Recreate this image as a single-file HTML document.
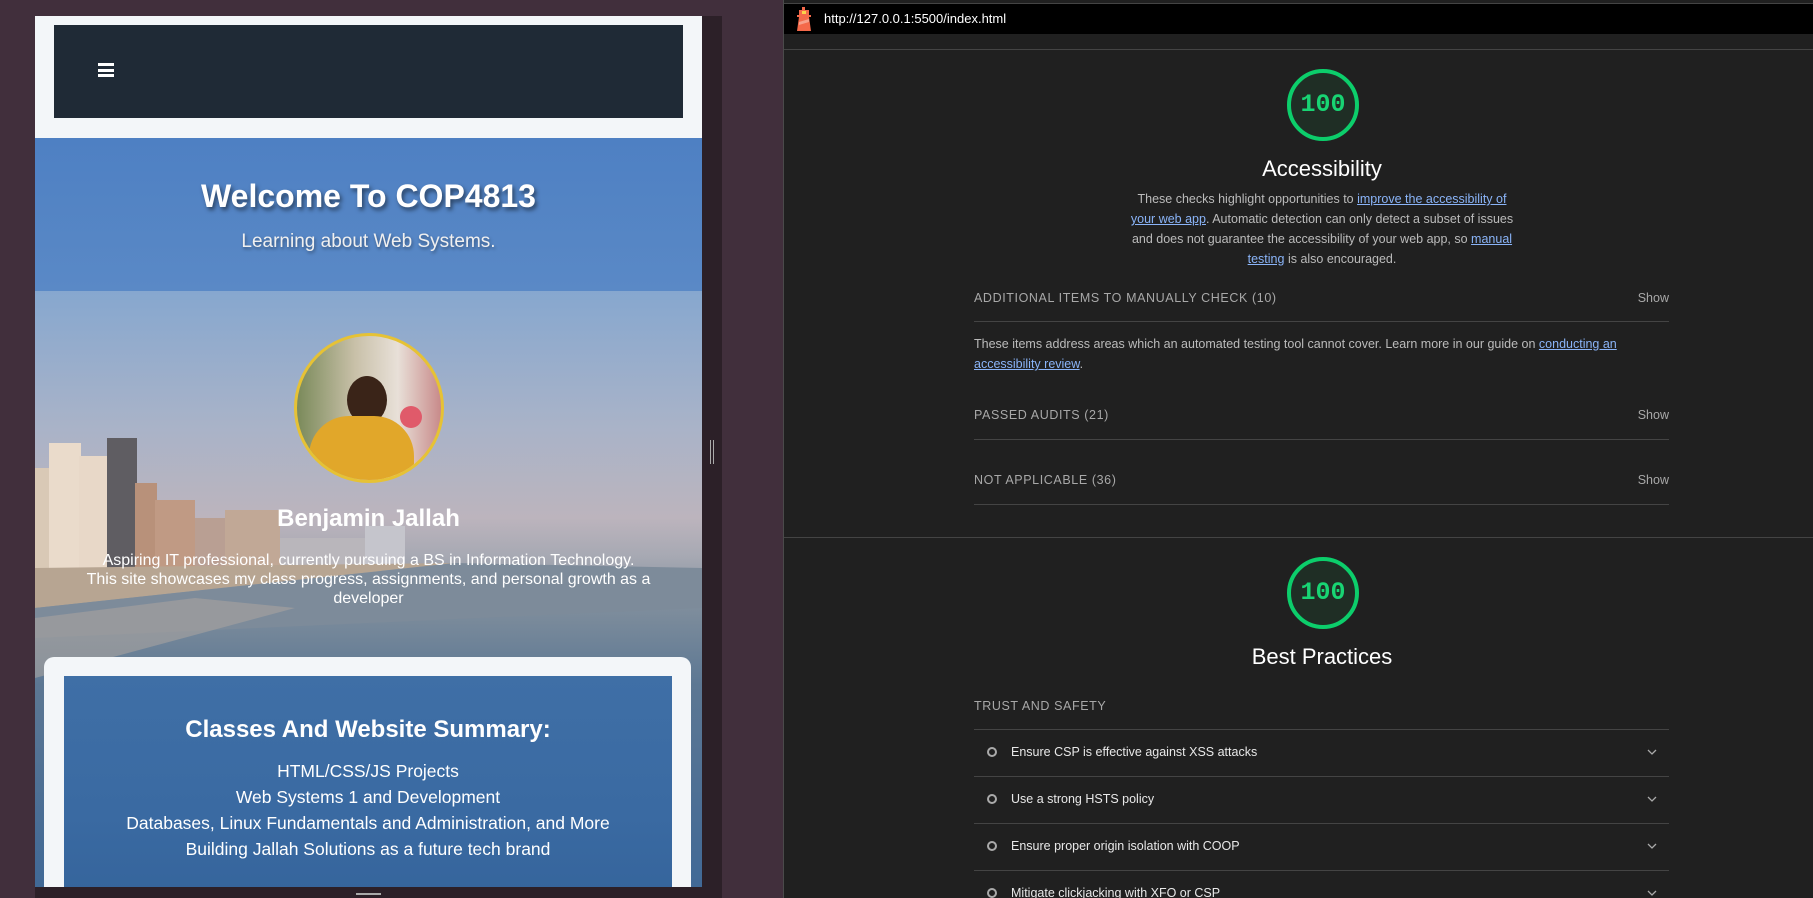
<!DOCTYPE html>
<html><head><meta charset="utf-8"><style>
*{margin:0;padding:0;box-sizing:border-box}
html,body{width:1813px;height:898px;overflow:hidden}
body{background:#412f3c;font-family:"Liberation Sans",Arial,sans-serif;position:relative}
.abs{position:absolute}
#frame{left:35px;top:16px;width:667px;height:871px;background:#f3f6f9;overflow:hidden}
#strip{left:702px;top:16px;width:20px;height:882px;background:#2c2028}
#bottombar{left:35px;top:887px;width:687px;height:11px;background:#2c2028}
#nav{left:19px;top:9px;width:629px;height:93px;background:#1f2a36}
#bg{left:0;top:122px;width:667px;height:760px;background:linear-gradient(180deg,#6d9fcf 0%,#86a7cf 20%,#a9b3c8 38%,#bcb4bd 50%,#a7a9b3 55%,#7e8d9c 62%,#5c7793 72%,#3f6896 100%)}
#hero{left:0;top:122px;width:667px;height:153px;background:linear-gradient(180deg,#4e80c3,#5a89c6);text-align:center;color:#fff}
.t{width:100%;text-align:center;color:#fff;left:0}
#card{left:9px;top:641px;width:647px;height:240px;background:#f3f6f9;border-radius:10px}
#inner{left:29px;top:660px;width:608px;height:230px;background:linear-gradient(180deg,#3f6fa6,#3a6aa2 60%,#35649b)}
#right{left:783px;top:0;width:1030px;height:898px;background:#202020;border-left:1px solid #4a4a4a;overflow:hidden}
.row{position:absolute;left:190px;width:695px;border-bottom:1px solid #444;font-size:12.5px;letter-spacing:.6px;color:#a8a8a8}
.row span{position:absolute;right:0;letter-spacing:0}
.gauge{position:absolute;left:503px;width:72px;height:72px;border:4px solid #0cce6b;border-radius:50%;background:#1f2e25;color:#18d473;font-family:"Liberation Mono",monospace;font-size:25px;font-weight:bold;text-align:center;line-height:64px}
.item{position:absolute;left:190px;width:695px;height:47px;border-bottom:1px solid #444;color:#e8e8e8;font-size:12.5px}
.item i{position:absolute;left:13px;top:17px;width:10px;height:10px;border:2px solid #aaa;border-radius:50%}
.item b{position:absolute;left:37px;top:15px;font-weight:normal}
.item svg{position:absolute;right:12px;top:19px}
a{color:#8ab4f8}
</style></head><body>
<div id="frame" class="abs">
 <div id="bg" class="abs">
  <svg width="667" height="760" style="position:absolute;left:0;top:0">
   <rect x="0" y="330" width="20" height="100" fill="#d9c9b6"/>
   <rect x="14" y="305" width="32" height="125" fill="#eadbcb"/>
   <rect x="44" y="318" width="30" height="112" fill="#e8d8c8"/>
   <rect x="72" y="300" width="30" height="130" fill="#5f5d62"/>
   <rect x="100" y="345" width="22" height="85" fill="#b8917a"/>
   <rect x="120" y="362" width="40" height="68" fill="#c09a84"/>
   <rect x="160" y="380" width="30" height="50" fill="#b99f93"/>
   <rect x="190" y="372" width="55" height="58" fill="#c1a896"/>
   <rect x="245" y="400" width="120" height="30" fill="#b9b6bb"/>
   <rect x="330" y="388" width="40" height="42" fill="#c5c5cc"/>
   <polygon points="0,430 420,425 0,470" fill="#b7a592"/>
   <polygon points="0,470 420,425 667,430 667,470 0,500" fill="#7d8b9a"/>
   <polygon points="0,480 160,460 260,470 0,540" fill="#a9a4a0" opacity=".6"/>
  </svg>
 </div>
 <div id="nav" class="abs"><div class="abs" style="left:44px;top:38px;width:16px;height:14px;border-top:3px solid #fff;border-bottom:3px solid #fff"><div style="margin-top:2.5px;height:3px;background:#fff"></div></div></div>
 <div id="hero" class="abs">
  <div class="abs t" style="top:40px;font-size:32px;font-weight:bold;text-shadow:2px 3px 4px rgba(0,0,0,.5)">Welcome To COP4813</div>
  <div class="abs t" style="top:93px;font-size:19px;color:#f0f0f0;text-shadow:1px 2px 3px rgba(0,0,0,.4)">Learning about Web Systems.</div>
 </div>
 <div class="abs" style="left:259px;top:317px;width:150px;height:150px;border-radius:50%;border:3px solid #e6c235;overflow:hidden;background:linear-gradient(90deg,#7a8a5a,#c8c0a8 40%,#e8e0d8 70%,#c88a8a)">
  <div class="abs" style="left:50px;top:40px;width:40px;height:48px;border-radius:50%;background:#3a2418"></div>
  <div class="abs" style="left:12px;top:80px;width:105px;height:90px;border-radius:40px 40px 0 0;background:#e1a72a"></div>
  <div class="abs" style="left:103px;top:70px;width:22px;height:22px;border-radius:50%;background:#e05a6a"></div>
 </div>
 <div class="abs t" style="top:489px;font-size:24px;font-weight:bold">Benjamin Jallah</div>
 <div class="abs t" style="top:535px;font-size:16px;line-height:19px;padding:0 30px">Aspiring IT professional, currently pursuing a BS in Information Technology.<br>This site showcases my class progress, assignments, and personal growth as a<br>developer</div>
 <div id="card" class="abs"></div>
 <div id="inner" class="abs">
  <div class="abs t" style="top:40px;font-size:24px;font-weight:bold">Classes And Website Summary:</div>
  <div class="abs t" style="top:82px;font-size:17.5px;line-height:26px">HTML/CSS/JS Projects<br>Web Systems 1 and Development<br>Databases, Linux Fundamentals and Administration, and More<br>Building Jallah Solutions as a future tech brand</div>
 </div>
</div>
<div id="strip" class="abs"><div class="abs" style="left:8px;top:424px;width:4px;height:24px;border-left:1px solid #aaa;border-right:1px solid #aaa"></div></div>
<div id="bottombar" class="abs"><div class="abs" style="left:321px;top:6px;width:25px;height:2px;background:#aaa"></div></div>
<div id="right" class="abs">
 <div class="abs" style="left:0;top:3px;width:1030px;height:31px;background:#000;border-top:1px solid #444"></div>
 <svg class="abs" style="left:12px;top:7px" width="16" height="24"><rect x="6" y="0" width="3" height="3" fill="#f4694a"/><rect x="3" y="3" width="10" height="5" fill="#f4694a"/><rect x="6" y="4" width="4" height="3" fill="#fbd34a"/><rect x="1" y="8" width="14" height="2" fill="#f4694a"/><polygon points="3,10 13,10 15,24 1,24" fill="#f4694a"/><polygon points="3,15 13,12 13,15 3,18" fill="#f7a08a"/></svg>
 <div class="abs" style="left:40px;top:11px;color:#fff;font-size:13px">http://127.0.0.1:5500/index.html</div>
 <div class="abs" style="left:0;top:49px;width:1030px;height:1px;background:#444"></div>
 <div class="gauge" style="top:69px">100</div>
 <div class="abs" style="left:0;width:1076px;top:156px;text-align:center;color:#fff;font-size:22px">Accessibility</div>
 <div class="abs" style="left:340px;width:396px;top:189px;text-align:center;color:#bbb;font-size:12.5px;line-height:20px">These checks highlight opportunities to <a href="#x">improve the accessibility of your web app</a>. Automatic detection can only detect a subset of issues and does not guarantee the accessibility of your web app, so <a href="#x">manual testing</a> is also encouraged.</div>
 <div class="row" style="top:291px;height:31px">ADDITIONAL ITEMS TO MANUALLY CHECK (10)<span>Show</span></div>
 <div class="abs" style="left:190px;width:695px;top:334px;color:#bbb;font-size:12.5px;line-height:20px">These items address areas which an automated testing tool cannot cover. Learn more in our guide on <a href="#x">conducting an accessibility review</a>.</div>
 <div class="row" style="top:408px;height:32px">PASSED AUDITS (21)<span>Show</span></div>
 <div class="row" style="top:473px;height:32px">NOT APPLICABLE (36)<span>Show</span></div>
 <div class="abs" style="left:0;top:537px;width:1030px;height:1px;background:#444"></div>
 <div class="gauge" style="top:557px">100</div>
 <div class="abs" style="left:0;width:1076px;top:644px;text-align:center;color:#fff;font-size:22px">Best Practices</div>
 <div class="row" style="top:699px;height:31px;border-bottom:1px solid #444">TRUST AND SAFETY</div>
 <div class="item" style="top:730px"><i></i><b>Ensure CSP is effective against XSS attacks</b><svg width="10" height="6"><path d="M1 1L5 5L9 1" stroke="#aaa" fill="none" stroke-width="1.3"/></svg></div>
 <div class="item" style="top:777px"><i></i><b>Use a strong HSTS policy</b><svg width="10" height="6"><path d="M1 1L5 5L9 1" stroke="#aaa" fill="none" stroke-width="1.3"/></svg></div>
 <div class="item" style="top:824px"><i></i><b>Ensure proper origin isolation with COOP</b><svg width="10" height="6"><path d="M1 1L5 5L9 1" stroke="#aaa" fill="none" stroke-width="1.3"/></svg></div>
 <div class="item" style="top:871px"><i></i><b>Mitigate clickjacking with XFO or CSP</b><svg width="10" height="6"><path d="M1 1L5 5L9 1" stroke="#aaa" fill="none" stroke-width="1.3"/></svg></div>
</div>
</body></html>
